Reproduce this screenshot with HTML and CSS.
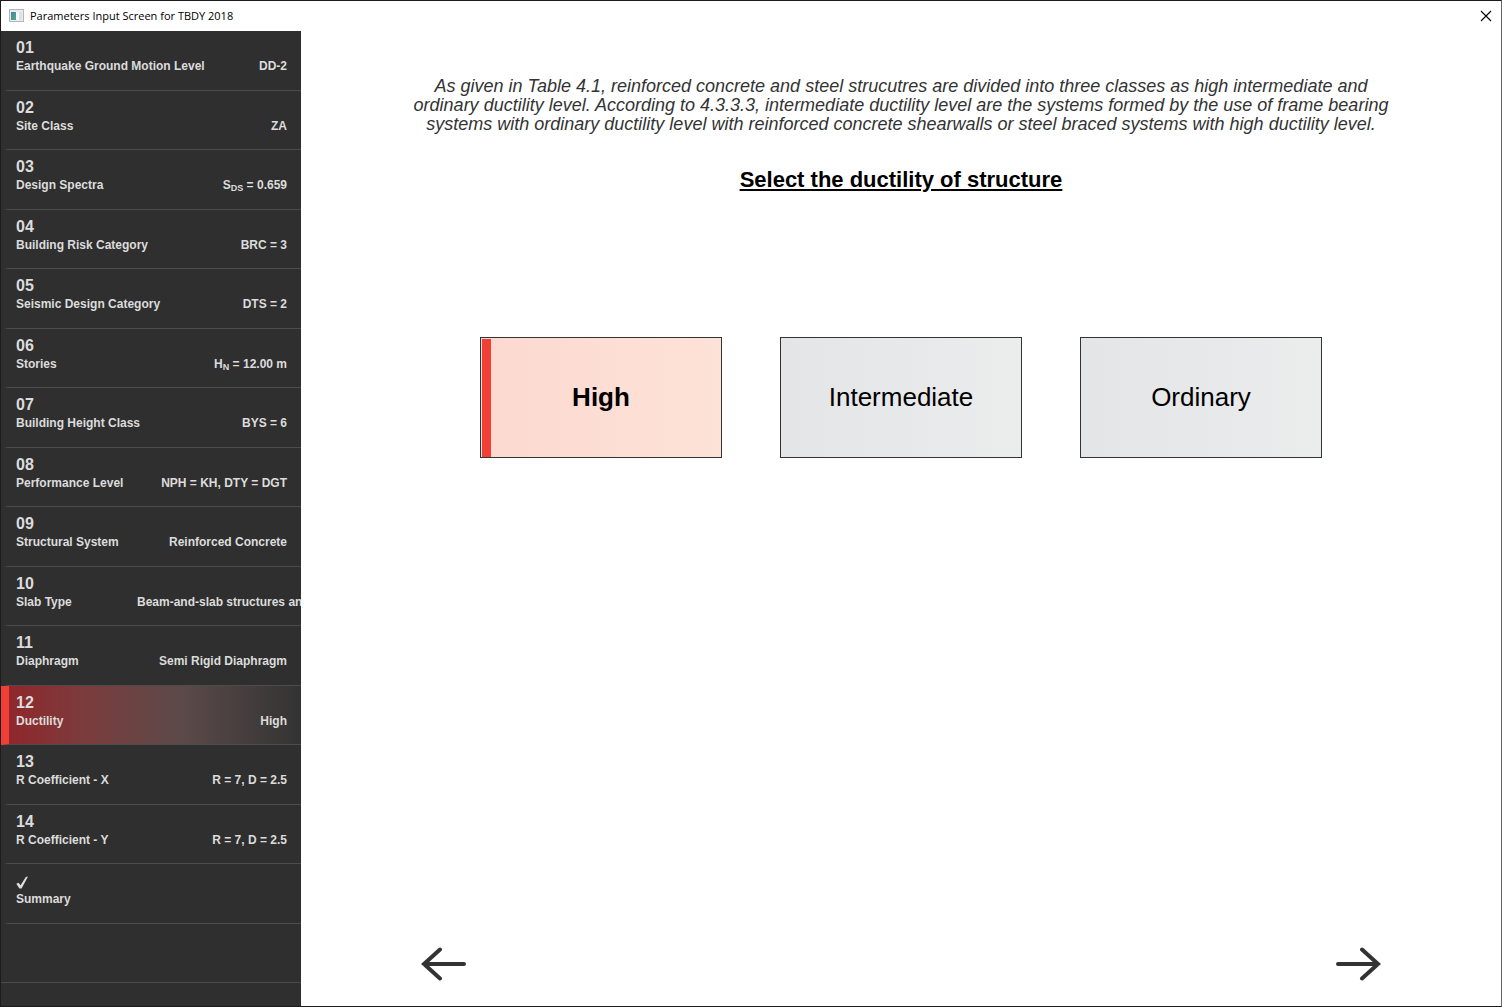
FILE: index.html
```html
<!DOCTYPE html>
<html lang="en">
<head>
  <meta charset="UTF-8">
  <meta name="viewport" content="width=device-width, initial-scale=1.0">
  <title>Parameters Input Screen for TBDY 2018</title>
  <link rel="stylesheet" href="styles.css">
</head>
<body>
<header class="titlebar">
  <svg class="app-icon" width="16" height="14" viewBox="0 0 16 14" aria-hidden="true">
    <defs>
      <linearGradient id="iconFill" x1="0" y1="0" x2="1" y2="1">
        <stop offset="0" stop-color="#4a7fae"/>
        <stop offset="1" stop-color="#4fae7c"/>
      </linearGradient>
    </defs>
    <rect x="0.5" y="0.5" width="14" height="12" fill="#e9ecee" stroke="#b3b7bb"/>
    <rect x="2" y="3" width="5" height="8" fill="url(#iconFill)"/>
    <rect x="7" y="3" width="3" height="8" fill="#f7f8f8"/>
    <rect x="10" y="3" width="3" height="8" fill="#dde3e0"/>
  </svg>
  <span class="title">Parameters Input Screen for TBDY 2018</span>
  <button class="close" type="button" aria-label="Close">
    <svg width="12" height="12" viewBox="0 0 12 12"><path d="M1 1L11 11M11 1L1 11" stroke="#000" stroke-width="1.1"/></svg>
  </button>
</header>
<div class="window">
  <nav class="steps">
    <button class="step" type="button"><span class="number">01</span><span class="row"><span class="name">Earthquake Ground Motion Level</span><span class="value">DD-2</span></span></button>
    <button class="step" type="button"><span class="number">02</span><span class="row"><span class="name">Site Class</span><span class="value">ZA</span></span></button>
    <button class="step" type="button"><span class="number">03</span><span class="row"><span class="name">Design Spectra</span><span class="value">S<sub>DS</sub> = 0.659</span></span></button>
    <button class="step" type="button"><span class="number">04</span><span class="row"><span class="name">Building Risk Category</span><span class="value">BRC = 3</span></span></button>
    <button class="step" type="button"><span class="number">05</span><span class="row"><span class="name">Seismic Design Category</span><span class="value">DTS = 2</span></span></button>
    <button class="step" type="button"><span class="number">06</span><span class="row"><span class="name">Stories</span><span class="value">H<sub>N</sub> = 12.00 m</span></span></button>
    <button class="step" type="button"><span class="number">07</span><span class="row"><span class="name">Building Height Class</span><span class="value">BYS = 6</span></span></button>
    <button class="step" type="button"><span class="number">08</span><span class="row"><span class="name">Performance Level</span><span class="value">NPH = KH, DTY = DGT</span></span></button>
    <button class="step" type="button"><span class="number">09</span><span class="row"><span class="name">Structural System</span><span class="value">Reinforced Concrete</span></span></button>
    <button class="step" type="button"><span class="number">10</span><span class="row"><span class="name">Slab Type</span><span class="value long">Beam-and-slab structures and</span></span></button>
    <button class="step" type="button"><span class="number">11</span><span class="row"><span class="name">Diaphragm</span><span class="value">Semi Rigid Diaphragm</span></span></button>
    <button class="step active" type="button" aria-current="step"><span class="number">12</span><span class="row"><span class="name">Ductility</span><span class="value">High</span></span></button>
    <button class="step" type="button"><span class="number">13</span><span class="row"><span class="name">R Coefficient - X</span><span class="value">R = 7, D = 2.5</span></span></button>
    <button class="step" type="button"><span class="number">14</span><span class="row"><span class="name">R Coefficient - Y</span><span class="value">R = 7, D = 2.5</span></span></button>
    <button class="step" type="button">
      <span class="number"><svg class="check" width="14" height="14" viewBox="0 0 14 14" aria-hidden="true"><path d="M0.3 7.8L2.6 6.8L4.5 9.2L9.8 1L12 0.6L5.6 12.6H3.4Z" fill="#dcdcdc"/></svg></span>
      <span class="row"><span class="name">Summary</span></span>
    </button>
    <div class="step empty"></div>
  </nav>
  <main class="content">
    <p class="description">As given in Table 4.1, reinforced concrete and steel strucutres are divided into three classes as high intermediate and ordinary ductility level. According to 4.3.3.3, intermediate ductility level are the systems formed by the use of frame bearing systems with ordinary ductility level with reinforced concrete shearwalls or steel braced systems with high ductility level.</p>
    <h1>Select the ductility of structure</h1>
    <div class="options">
      <button class="option selected" type="button" aria-pressed="true">High</button>
      <button class="option" type="button" aria-pressed="false">Intermediate</button>
      <button class="option" type="button" aria-pressed="false">Ordinary</button>
    </div>
    <div class="pager">
      <button class="arrow" type="button" aria-label="Previous">
        <svg width="46" height="34" viewBox="0 0 46 34"><path d="M43 17H3M19 2.5L3 17L19 31.5" fill="none" stroke="#333" stroke-width="4" stroke-linecap="round"/></svg>
      </button>
      <button class="arrow" type="button" aria-label="Next">
        <svg width="46" height="34" viewBox="0 0 46 34"><path d="M3 17H43M27 2.5L43 17L27 31.5" fill="none" stroke="#333" stroke-width="4" stroke-linecap="round"/></svg>
      </button>
    </div>
  </main>
</div>
</body>
</html>
```
FILE: styles.css
```css
* {
  box-sizing: border-box;
}

body {
  display: flex;
  flex-direction: column;
  min-height: 100vh;
  margin: 0;
  border: 1px solid #1e1a20;
  border-right-color: #666;
  background-color: #fff;
  font-family: "Liberation Sans", Arial, sans-serif;
}

button {
  margin: 0;
  padding: 0;
  border: none;
  background: none;
  font-family: inherit;
  cursor: pointer;
}

svg {
  display: block;
}

.titlebar {
  display: flex;
  align-items: center;
  height: 30px;
  padding: 0 9px 0 8px;
}

.title {
  flex: 1;
  margin-left: 5px;
  font-family: "Open Sans", "Noto Sans", sans-serif;
  font-size: 11px;
  line-height: 16px;
  color: #000;
}

.window {
  display: flex;
  flex: 1;
}

.steps {
  display: grid;
  grid-template-rows: repeat(16, 1fr);
  flex: 0 0 300px;
  padding-bottom: 23px;
  background-color: #2f2f2f;
}

.step {
  display: flex;
  flex-direction: column;
  min-width: 0;
  padding: 8px 14px 0 15px;
  border-bottom: 1px solid;
  border-image: linear-gradient(to right, #2f2f2f 4px, #4c4c4c 8px) 1;
  overflow: hidden;
  color: #dcdcdc;
  font-size: 12px;
  font-weight: bold;
  line-height: 18px;
  text-align: left;
}

.step.active {
  padding-left: 7px;
  border-left: 8px solid #f04035;
  border-image: none;
  border-bottom: 1px solid #4c4c4c;
  background: linear-gradient(to right, #8f272b, #7c3b3c 25%, #5a4a49 60%, #333 100%);
}

.step.empty {
  border-image: none;
  border-bottom: 1px solid #4c4c4c;
}

.number {
  height: 18px;
  font-size: 16px;
}

.check {
  margin-top: 4px;
}

.row {
  display: flex;
  justify-content: space-between;
  height: 18px;
  white-space: nowrap;
}

.value.long {
  width: 150px;
}

sub {
  font-size: 9px;
  line-height: 0;
  vertical-align: -2px;
}

.content {
  display: flex;
  flex: 1;
  flex-direction: column;
  align-items: center;
  padding: 46px 20px 25px;
}

.description {
  max-width: 990px;
  margin: 0;
  color: #333;
  font-size: 18px;
  font-style: italic;
  line-height: 19px;
  text-align: center;
}

h1 {
  margin: 33px 0 0;
  font-size: 22px;
  line-height: 26px;
  text-decoration: underline;
  color: #000;
}

.options {
  display: flex;
  gap: 58px;
  margin-top: 144px;
}

.option {
  width: 242px;
  height: 121px;
  border: 1px solid #333;
  background: linear-gradient(to right, #e4e5e7, #ebecec);
  font-size: 26px;
  color: #000;
}

.option.selected {
  background:
    linear-gradient(#f04035, #f04035) 1px 1px / 9px 100% no-repeat,
    linear-gradient(to right, #fcd9d0, #fde2d7);
  font-weight: bold;
}

.pager {
  display: flex;
  justify-content: space-between;
  width: 100%;
  margin-top: auto;
  padding: 0 100px;
}
```
